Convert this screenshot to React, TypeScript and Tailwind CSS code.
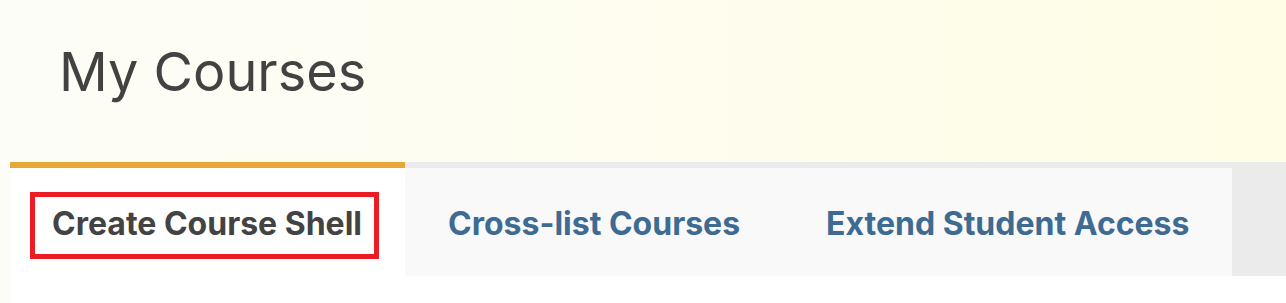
import React from "react";

const tabs = ["Create Course Shell", "Cross-list Courses", "Extend Student Access"];

const App = () => {
  return (
    <div
      className="min-h-screen bg-gradient-to-r from-[#fdfdf8] to-[#fffde6]"
      style={{ fontFamily: "Inter, 'Noto Sans', sans-serif" }}
    >
      <h1 className="h-[162px] pl-[59px] pt-[45px] text-[54px] leading-none font-normal text-[#424242]">
        My Courses
      </h1>

      <div className="ml-[10px] bg-white">
        <div className="flex h-[114px] bg-[#ebebeb]">
          {tabs.map((tab, i) =>
            i === 0 ? (
              <div
                key={tab}
                className="flex h-[114px] items-center border-t-[6px] border-[#e8a838] bg-white pl-[42px] pr-[43px] pt-[3px]"
              >
                <span className="relative text-[32px] font-bold text-[#434343]">
                  {tab}
                  <span className="pointer-events-none absolute -top-[8px] -bottom-[11px] -left-[22px] -right-[17px] border-[5px] border-[#ec1c24]" />
                </span>
              </div>
            ) : (
              <div
                key={tab}
                className="mt-[6px] flex h-[108px] items-center bg-[#f9f9f9] px-[43px] pt-[3px]"
              >
                <span className="text-[32px] font-bold text-[#3e6b92]">{tab}</span>
              </div>
            )
          )}
        </div>
        <div className="h-[27px]" />
      </div>
    </div>
  );
};

export default App;
